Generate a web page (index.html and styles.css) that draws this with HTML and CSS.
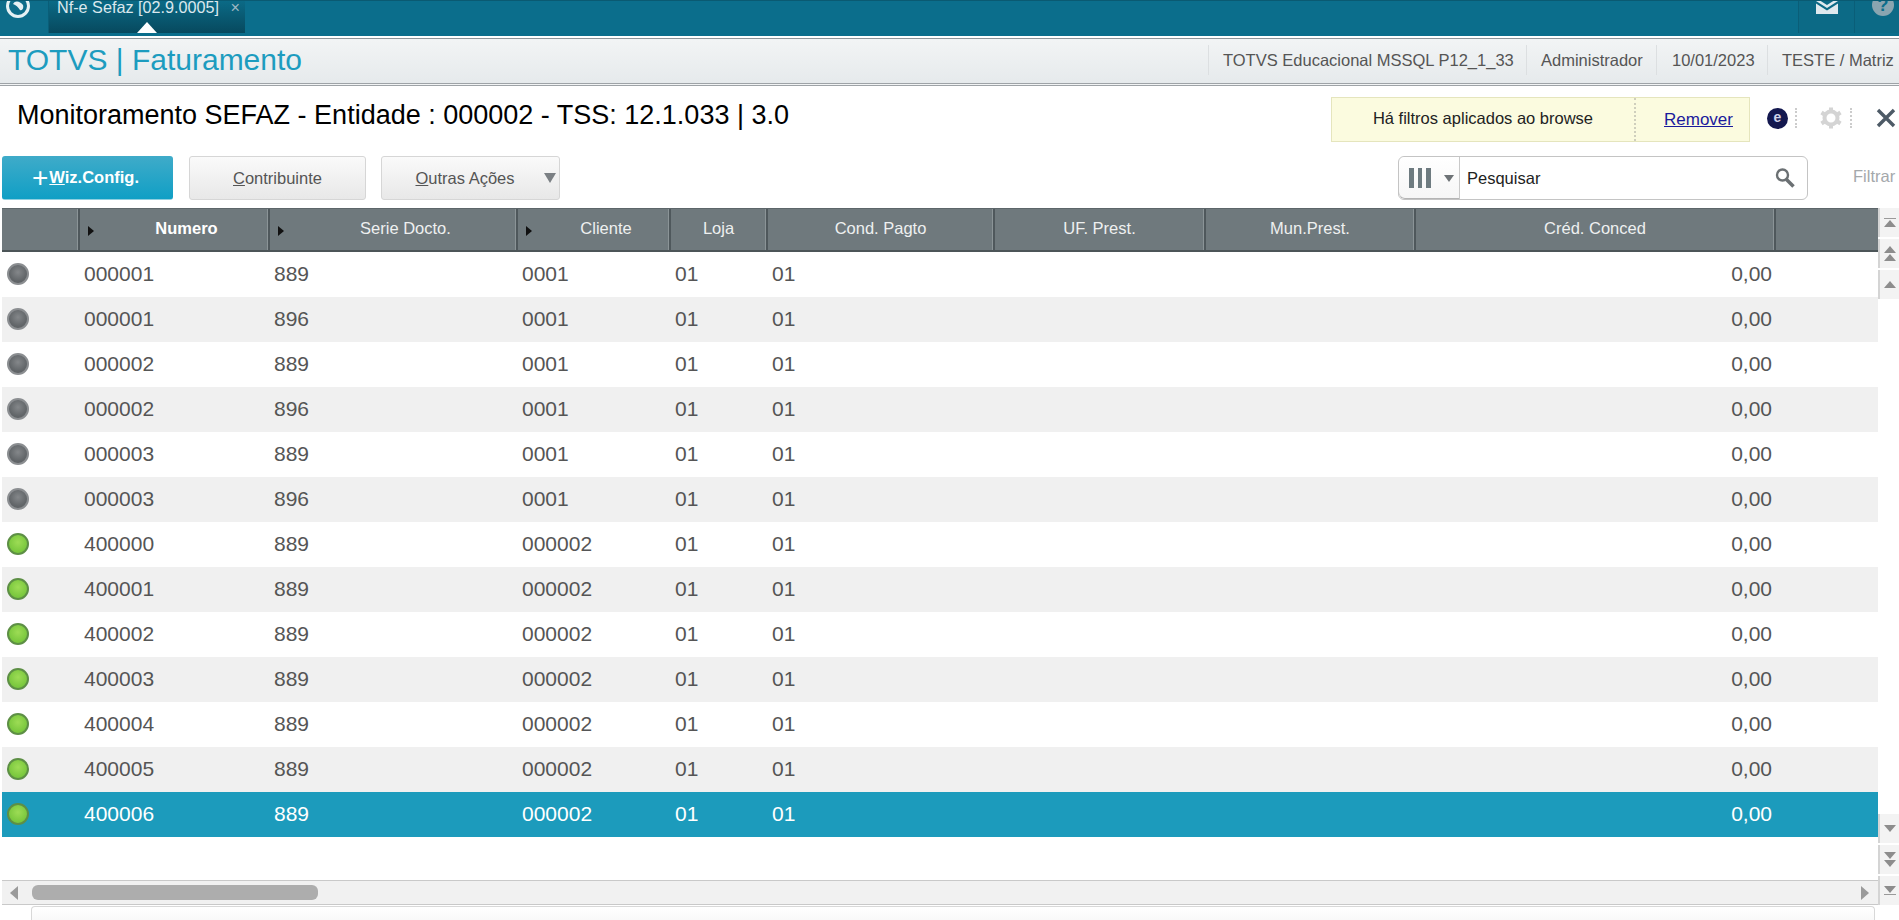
FILE: index.html
```html
<!DOCTYPE html>
<html lang="pt-BR">
<head>
    <meta charset="UTF-8">
    <title>Monitoramento SEFAZ</title>
    <link rel="stylesheet" href="styles.css">
</head>
<body>
<div class="page">
    <div class="topbar">
        <div class="logo-cell">
            <svg class="logo" width="26" height="26" viewBox="0 0 26 26"><circle cx="13" cy="13" r="10.5" fill="none" stroke="#e6f1f4" stroke-width="3"/><path d="M8 11 C10 7 15 8 18 12 C19 15 17 18 15 17 C13 14 11 12 8 11 Z" fill="#e6f1f4"/></svg>
        </div>
        <div class="tab">
            <span class="tab-label">Nf-e Sefaz [02.9.0005]</span>
            <span class="tab-close">×</span>
            <span class="tab-mark"></span>
        </div>
        <div class="top-actions">
            <div class="top-action">
                <svg width="22" height="16" viewBox="0 0 22 16"><path d="M0 0 L11 7 L22 0 V3 L11 10 L0 3 Z M0 5.5 L11 12.5 L22 5.5 V16 H0 Z" fill="#dfe9ee"/></svg>
            </div>
            <div class="top-action">
                <span class="help">?</span>
            </div>
        </div>
    </div>

    <div class="appbar">
        <div class="app-title">TOTVS | Faturamento</div>
        <div class="app-info">
            <span class="info-cell info-env">TOTVS Educacional MSSQL P12_1_33</span>
            <span class="info-cell info-user">Administrador</span>
            <span class="info-cell info-date">10/01/2023</span>
            <span class="info-cell info-branch">TESTE / Matriz</span>
        </div>
    </div>

    <div class="title-row">
        <h1 class="page-title">Monitoramento SEFAZ - Entidade : 000002 - TSS: 12.1.033 | 3.0</h1>
        <div class="filter-note">
            <span class="filter-text">Há filtros aplicados ao browse</span>
            <a class="filter-link" href="#">Remover</a>
        </div>
        <div class="title-tools">
            <span class="tool-cell tool-badge"><span class="badge-e">e</span></span>
            <span class="tool-cell tool-gear">
                <svg width="24" height="24" viewBox="0 0 24 24"><circle cx="12" cy="12" r="6.5" fill="none" stroke="#d4d4d4" stroke-width="4"/><path d="M12 1.5 V5 M12 19 V22.5 M2.5 6.5 L5.5 8.5 M18.5 15.5 L21.5 17.5 M2.5 17.5 L5.5 15.5 M18.5 8.5 L21.5 6.5" stroke="#d4d4d4" stroke-width="4"/></svg>
            </span>
            <span class="tool-close">
                <svg width="20" height="20" viewBox="0 0 20 20"><path d="M2 2 L18 18 M18 2 L2 18" stroke="#4d5a66" stroke-width="3.4"/></svg>
            </span>
        </div>
    </div>

    <div class="action-row">
        <button class="btn btn-primary"><span class="plus">+</span><span><u>W</u>iz.Config.</span></button>
        <button class="btn btn-contrib"><span><u>C</u>ontribuinte</span></button>
        <button class="btn btn-more"><span><u>O</u>utras Ações</span><i class="caret"></i></button>
        <div class="search">
            <div class="search-cols">
                <span class="bars"><i></i><i></i><i></i></span>
                <i class="caret caret-small"></i>
            </div>
            <span class="search-text">Pesquisar</span>
            <svg class="search-icon" width="22" height="22" viewBox="0 0 22 22"><circle cx="8.5" cy="8" r="5.5" fill="none" stroke="#6b7073" stroke-width="2.4"/><path d="M12.5 12.5 L19.5 19.5" stroke="#6b7073" stroke-width="3.6"/></svg>
        </div>
        <span class="filter-action">Filtrar</span>
    </div>

    <div class="browse">
        <div class="browse-main">
            <div class="grid-head">
                <div class="hcell"></div>
                <div class="hcell hsort hbold">Numero</div>
                <div class="hcell hsort">Serie Docto.</div>
                <div class="hcell hsort">Cliente</div>
                <div class="hcell">Loja</div>
                <div class="hcell">Cond. Pagto</div>
                <div class="hcell">UF. Prest.</div>
                <div class="hcell">Mun.Prest.</div>
                <div class="hcell">Créd. Conced</div>
                <div class="hcell hlast"></div>
            </div>
            <div class="grid-rows">
                <div class="row"><span class="cell"><i class="dot dot-grey"></i></span><span class="cell">000001</span><span class="cell">889</span><span class="cell">0001</span><span class="cell">01</span><span class="cell">01</span><span class="cell"></span><span class="cell"></span><span class="cell cell-num">0,00</span><span class="cell"></span></div>
                <div class="row"><span class="cell"><i class="dot dot-grey"></i></span><span class="cell">000001</span><span class="cell">896</span><span class="cell">0001</span><span class="cell">01</span><span class="cell">01</span><span class="cell"></span><span class="cell"></span><span class="cell cell-num">0,00</span><span class="cell"></span></div>
                <div class="row"><span class="cell"><i class="dot dot-grey"></i></span><span class="cell">000002</span><span class="cell">889</span><span class="cell">0001</span><span class="cell">01</span><span class="cell">01</span><span class="cell"></span><span class="cell"></span><span class="cell cell-num">0,00</span><span class="cell"></span></div>
                <div class="row"><span class="cell"><i class="dot dot-grey"></i></span><span class="cell">000002</span><span class="cell">896</span><span class="cell">0001</span><span class="cell">01</span><span class="cell">01</span><span class="cell"></span><span class="cell"></span><span class="cell cell-num">0,00</span><span class="cell"></span></div>
                <div class="row"><span class="cell"><i class="dot dot-grey"></i></span><span class="cell">000003</span><span class="cell">889</span><span class="cell">0001</span><span class="cell">01</span><span class="cell">01</span><span class="cell"></span><span class="cell"></span><span class="cell cell-num">0,00</span><span class="cell"></span></div>
                <div class="row"><span class="cell"><i class="dot dot-grey"></i></span><span class="cell">000003</span><span class="cell">896</span><span class="cell">0001</span><span class="cell">01</span><span class="cell">01</span><span class="cell"></span><span class="cell"></span><span class="cell cell-num">0,00</span><span class="cell"></span></div>
                <div class="row"><span class="cell"><i class="dot dot-green"></i></span><span class="cell">400000</span><span class="cell">889</span><span class="cell">000002</span><span class="cell">01</span><span class="cell">01</span><span class="cell"></span><span class="cell"></span><span class="cell cell-num">0,00</span><span class="cell"></span></div>
                <div class="row"><span class="cell"><i class="dot dot-green"></i></span><span class="cell">400001</span><span class="cell">889</span><span class="cell">000002</span><span class="cell">01</span><span class="cell">01</span><span class="cell"></span><span class="cell"></span><span class="cell cell-num">0,00</span><span class="cell"></span></div>
                <div class="row"><span class="cell"><i class="dot dot-green"></i></span><span class="cell">400002</span><span class="cell">889</span><span class="cell">000002</span><span class="cell">01</span><span class="cell">01</span><span class="cell"></span><span class="cell"></span><span class="cell cell-num">0,00</span><span class="cell"></span></div>
                <div class="row"><span class="cell"><i class="dot dot-green"></i></span><span class="cell">400003</span><span class="cell">889</span><span class="cell">000002</span><span class="cell">01</span><span class="cell">01</span><span class="cell"></span><span class="cell"></span><span class="cell cell-num">0,00</span><span class="cell"></span></div>
                <div class="row"><span class="cell"><i class="dot dot-green"></i></span><span class="cell">400004</span><span class="cell">889</span><span class="cell">000002</span><span class="cell">01</span><span class="cell">01</span><span class="cell"></span><span class="cell"></span><span class="cell cell-num">0,00</span><span class="cell"></span></div>
                <div class="row"><span class="cell"><i class="dot dot-green"></i></span><span class="cell">400005</span><span class="cell">889</span><span class="cell">000002</span><span class="cell">01</span><span class="cell">01</span><span class="cell"></span><span class="cell"></span><span class="cell cell-num">0,00</span><span class="cell"></span></div>
                <div class="row row-selected"><span class="cell"><i class="dot dot-green"></i></span><span class="cell">400006</span><span class="cell">889</span><span class="cell">000002</span><span class="cell">01</span><span class="cell">01</span><span class="cell"></span><span class="cell"></span><span class="cell cell-num">0,00</span><span class="cell"></span></div>
            </div>
            <div class="hscroll">
                <i class="arrow-left"></i>
                <div class="hscroll-track"><div class="hscroll-thumb"></div></div>
                <i class="arrow-right"></i>
            </div>
        </div>
        <div class="vscroll">
            <div class="vscroll-group">
                <div class="vbtn"><i class="stop"></i><i class="up"></i></div>
                <div class="vbtn"><i class="up"></i><i class="up"></i></div>
                <div class="vbtn"><i class="up"></i></div>
            </div>
            <div class="vscroll-group">
                <div class="vbtn"><i class="down"></i></div>
                <div class="vbtn"><i class="down"></i><i class="down"></i></div>
                <div class="vbtn"><i class="down"></i><i class="stop"></i></div>
            </div>
        </div>
    </div>

    <div class="footer-panel"></div>
</div>
</body>
</html>
```
FILE: styles.css
```css
* {
    box-sizing: border-box;
}
html, body {
    margin: 0;
    padding: 0;
    background: #fff;
}
body {
    font-family: "Liberation Sans", Arial, sans-serif;
    color: #555;
}
.page {
    width: 1899px;
    height: 920px;
    overflow: hidden;
    display: flex;
    flex-direction: column;
}

/* top bar */
.topbar {
    height: 36px;
    flex: none;
    display: flex;
    background: #0b6e8c;
    border-top: 1px solid #0a5a72;
}
.logo-cell {
    width: 49px;
    height: 32px;
    overflow: hidden;
    background: #0e6d8a;
    border-right: 1px solid #0a5e78;
    padding-left: 5px;
}
.logo {
    display: block;
    margin-top: -8px;
}
.tab {
    position: relative;
    width: 196px;
    height: 32px;
    overflow: hidden;
    background: linear-gradient(#0b6a86, #07495e);
    color: #dbe8ee;
    font-size: 16.2px;
    line-height: 12px;
    padding-left: 8px;
    white-space: nowrap;
}
.tab-close {
    margin-left: 7px;
    color: #9fb8c3;
}
.tab-mark {
    position: absolute;
    left: 88px;
    bottom: 0;
    border-left: 10px solid transparent;
    border-right: 10px solid transparent;
    border-bottom: 11px solid #fff;
}
.top-actions {
    margin-left: auto;
    display: flex;
}
.top-action {
    width: 56px;
    height: 32px;
    overflow: hidden;
    display: flex;
    justify-content: center;
    background: #0c6a86;
    border-left: 1px solid #0a5e78;
}
.top-action svg {
    margin-top: -3px;
}
.top-action:last-child {
    width: 45px;
    padding-left: 17px;
    justify-content: flex-start;
}
.help {
    width: 22px;
    height: 22px;
    margin-top: -7px;
    border-radius: 50%;
    background: #8aa5b0;
    color: #0b6e8c;
    font-size: 18px;
    font-weight: bold;
    line-height: 22px;
    text-align: center;
}

/* application bar */
.appbar {
    height: 48px;
    flex: none;
    margin-top: 2px;
    display: flex;
    justify-content: space-between;
    align-items: stretch;
    border-top: 1px solid #8e9499;
    border-bottom: 3px double #9ea3a7;
    background: linear-gradient(#f2f4f5, #e6eaec);
}
.app-title {
    padding: 3px 0 0 8px;
    font-size: 30px;
    line-height: 36px;
    color: #1d9cbf;
}
.app-info {
    display: flex;
    align-items: center;
    font-size: 16.5px;
    color: #555;
    padding-bottom: 2px;
}
.info-cell {
    height: 30px;
    line-height: 30px;
    padding-left: 14px;
    border-left: 1px solid #dcdfe1;
    white-space: nowrap;
}
.info-env {
    width: 318px;
}
.info-user {
    width: 130px;
}
.info-date {
    width: 111px;
    padding-left: 15px;
}
.info-branch {
    width: 132px;
}

/* title row */
.title-row {
    height: 70px;
    flex: none;
    display: flex;
    align-items: flex-start;
}
.page-title {
    margin: 13px 0 0 17px;
    width: 1314px;
    font-size: 27px;
    line-height: 32px;
    font-weight: normal;
    color: #000;
    white-space: nowrap;
}
.filter-note {
    width: 419px;
    height: 45px;
    margin-top: 11px;
    display: flex;
    align-items: center;
    background: #fbfbdf;
    border: 1px solid #e5e5bd;
    font-size: 16.5px;
    color: #222;
}
.filter-text {
    width: 304px;
    height: 100%;
    line-height: 41px;
    text-align: center;
    border-right: 2px dotted #cfcfbd;
}
.filter-link {
    flex: 1;
    padding-left: 12px;
    font-size: 17px;
    text-align: center;
    color: #1a1a9c;
}
.title-tools {
    display: flex;
    align-items: center;
    height: 20px;
    margin-top: 22px;
}
.tool-cell {
    height: 20px;
    display: flex;
    align-items: center;
    border-right: 2px dotted #ccc;
}
.tool-badge {
    width: 47px;
    padding-left: 17px;
}
.tool-gear {
    width: 55px;
    padding-left: 22px;
}
.tool-gear svg {
    flex: none;
}
.tool-close {
    margin-left: 24px;
    display: flex;
}
.badge-e {
    width: 21px;
    height: 21px;
    flex: none;
    border-radius: 50%;
    background: #14184f;
    color: #cfd3e8;
    font-size: 14px;
    font-weight: bold;
    line-height: 18px;
    text-align: center;
}

/* buttons and search */
.action-row {
    height: 52px;
    flex: none;
    display: flex;
    align-items: flex-start;
    padding-left: 2px;
}
.btn {
    height: 44px;
    margin: 0;
    padding: 0;
    font-family: inherit;
    font-size: 16.5px;
    color: #555;
    display: flex;
    align-items: center;
    justify-content: center;
    border: 1px solid #d6d6d6;
    border-radius: 3px;
    background: linear-gradient(#fafafa, #e8e8e8);
}
.btn-primary {
    width: 171px;
    padding-right: 4px;
    color: #fff;
    font-weight: bold;
    border: none;
    border-bottom: 1px solid #8fcfe0;
    background: linear-gradient(#3fabc9, #109fc5);
}
.plus {
    font-size: 28px;
    font-weight: normal;
    line-height: 28px;
    margin-right: 1px;
}
.btn-contrib {
    width: 177px;
    margin-left: 16px;
}
.btn-more {
    position: relative;
    width: 179px;
    margin-left: 15px;
    padding-right: 11px;
}
.caret {
    border-left: 6px solid transparent;
    border-right: 6px solid transparent;
    border-top: 10px solid #7b8084;
}
.btn-more .caret {
    position: absolute;
    right: 3px;
    top: 16px;
}
.search {
    width: 410px;
    height: 44px;
    margin-left: 838px;
    display: flex;
    align-items: center;
    background: #fff;
    border: 1px solid #c4c4c4;
    border-radius: 6px;
    font-size: 16.5px;
    color: #222;
}
.search-cols {
    width: 61px;
    height: 100%;
    display: flex;
    align-items: center;
    gap: 13px;
    padding-left: 10px;
    border-right: 1px solid #c9c9c9;
    background: linear-gradient(#fff, #f6f6f6);
    border-radius: 6px 0 0 6px;
    box-shadow: inset 0 -1px 0 #b4b4b4;
}
.bars {
    display: flex;
    gap: 4px;
}
.bars i {
    width: 4.5px;
    height: 20px;
    background: #6e7b80;
}
.caret-small {
    border-left-width: 5px;
    border-right-width: 5px;
    border-top-width: 7px;
    border-top-color: #6e7376;
}
.search-text {
    flex: 1;
    padding-left: 7px;
}
.search-icon {
    margin-right: 11px;
}
.filter-action {
    margin: 10px 0 0 45px;
    font-size: 16.5px;
    line-height: 20px;
    color: #a4a8ab;
}

/* browse grid */
.browse {
    height: 697px;
    flex: none;
    display: flex;
}
.browse-main {
    width: 1878px;
    padding-left: 2px;
    display: flex;
    flex-direction: column;
}
.grid-head, .row {
    display: grid;
    grid-template-columns: 78px 190px 248px 153px 97px 227px 211px 210px 360px 102px;
}
.grid-head {
    height: 44px;
    background: #6f797d;
    border-bottom: 2px solid #4c5558;
    border-top: 1px solid #5d666a;
}
.hcell {
    position: relative;
    border-right: 2px solid #4f585c;
    box-shadow: inset -1px 0 0 #8b9497;
    color: #eef0f0;
    font-size: 16.5px;
    line-height: 39px;
    text-align: center;
}
.hlast {
    border-right: none;
    box-shadow: none;
}
.hsort {
    padding-left: 25px;
}
.hsort::before {
    content: "";
    position: absolute;
    left: 8px;
    top: 17px;
    border-top: 5px solid transparent;
    border-bottom: 5px solid transparent;
    border-left: 6px solid #111;
}
.hbold {
    font-weight: bold;
    color: #fff;
}
.grid-rows {
    height: 628px;
}
.row {
    height: 45px;
    font-size: 21px;
    line-height: 43px;
    color: #555;
}
.row:nth-child(even) {
    background: #f0f0f0;
}
.row-selected, .row-selected:nth-child(odd) {
    background: #1c9bbc;
    color: #fff;
}
.cell {
    padding-left: 4px;
    white-space: nowrap;
}
.cell-num {
    padding: 0 4px 0 0;
    text-align: right;
}
.dot {
    display: block;
    width: 22px;
    height: 22px;
    margin: 11px 0 0 1px;
    border-radius: 50%;
}
.dot-grey {
    background: radial-gradient(circle at 50% 40%, #84878a, #63676a 60%, #55595b);
    border: 2px solid #8b8e91;
}
.dot-green {
    background: radial-gradient(circle at 50% 40%, #9ddc55, #79c73d 70%);
    border: 2px solid #5d8f45;
}

/* scrollbars */
.hscroll {
    height: 25px;
    display: flex;
    align-items: center;
    background: #f1f1f1;
    border-top: 1px solid #c9c9c9;
    border-bottom: 1px solid #c9c9c9;
}
.hscroll-track {
    flex: 1;
    margin-left: 14px;
}
.hscroll-thumb {
    width: 286px;
    height: 15px;
    border-radius: 6px;
    background: #adadad;
}
.arrow-left {
    margin-left: 8px;
    border-top: 7px solid transparent;
    border-bottom: 7px solid transparent;
    border-right: 8px solid #9a9a9a;
}
.arrow-right {
    margin-right: 9px;
    border-top: 7px solid transparent;
    border-bottom: 7px solid transparent;
    border-left: 8px solid #9a9a9a;
}
.vscroll {
    width: 21px;
    display: flex;
    flex-direction: column;
    justify-content: space-between;
}
.vscroll-group {
    display: flex;
    flex-direction: column;
    gap: 2px;
}
.vbtn {
    height: 29px;
    display: flex;
    flex-direction: column;
    align-items: center;
    justify-content: center;
    gap: 1px;
    background: #f3f3f3;
    border-left: 2px solid #d4d4d4;
}
.up {
    border-left: 6px solid transparent;
    border-right: 6px solid transparent;
    border-bottom: 7px solid #8d8d8d;
}
.down {
    border-left: 6px solid transparent;
    border-right: 6px solid transparent;
    border-top: 7px solid #8d8d8d;
}
.stop {
    width: 12px;
    height: 1px;
    background: #9a9a9a;
}

/* bottom panel */
.footer-panel {
    height: 20px;
    flex: none;
    margin: 1px 24px 0 31px;
    border: 1px solid #d8d8d8;
    border-bottom: none;
    border-radius: 4px 4px 0 0;
    background: linear-gradient(#fff, #f6f6f6);
}
```
